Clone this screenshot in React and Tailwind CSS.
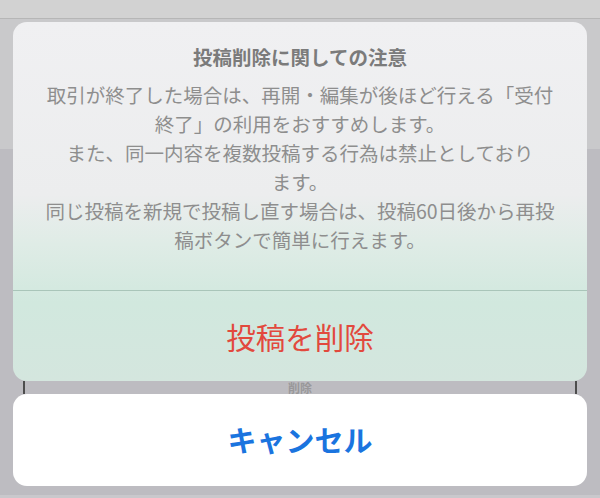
export default function App() {
  const lines = [
    "取引が終了した場合は、再開・編集が後ほど行える「受付",
    "終了」の利用をおすすめします。",
    "また、同一内容を複数投稿する行為は禁止としており",
    "ます。",
    "同じ投稿を新規で投稿し直す場合は、投稿60日後から再投",
    "稿ボタンで簡単に行えます。",
  ];

  return (
    <div
      className="relative w-[600px] h-[498px] overflow-hidden"
      style={{ fontFamily: '"Noto Sans CJK JP", "Noto Sans", sans-serif' }}
    >
      {/* Backdrop (page under the sheet) */}
      <div className="flex flex-col h-full">
        <div className="h-[19px] bg-[#d2d2d2] border-b border-[#b6b6b6]" />
        <div className="h-[130px] bg-[#c9c9cb]" />
        <div className="flex-1 bg-[#bdbcc1]" />
        <div className="h-[3px] bg-[#c9c8cc]" />
      </div>

      {/* Action sheet */}
      <div className="absolute inset-0 px-[13px] pt-[22px] flex flex-col">
        <div className="rounded-[14px] overflow-hidden bg-[linear-gradient(to_bottom,#f0f0f2_0%,#ecedee_48%,#dfece6_62%,#d1e8de_78%,#d4e6de_100%)]">
          <div className="pt-[22px] pb-[36px] px-4 text-center">
            <p className="text-[19.5px] leading-[26px] font-bold text-[#7b7b7b]">
              投稿削除に関しての注意
            </p>
            <div className="mt-[10px] text-[19.5px] leading-[29px] text-[#8e8e8e]">
              {lines.map((l, i) => (
                <p key={i} className="whitespace-nowrap">
                  {l}
                </p>
              ))}
            </div>
          </div>
          <div className="h-px bg-[#a9c5b9]" />
          <button className="w-full h-[90px] flex items-center justify-center text-[29.5px] text-[#e2493d]">
            投稿を削除
          </button>
        </div>

        {/* peek of content underneath */}
        <div className="h-[13px] mx-[10px] border-x-2 border-[#4d4d4d] flex justify-center items-end">
          <span className="text-[12px] leading-[12px] font-bold text-[#8a8a8a] opacity-70">
            削除
          </span>
        </div>

        <button className="h-[92px] w-full rounded-[14px] bg-white flex items-center justify-center text-[29px] font-bold text-[#1a74df]">
          キャンセル
        </button>
      </div>
    </div>
  );
}
